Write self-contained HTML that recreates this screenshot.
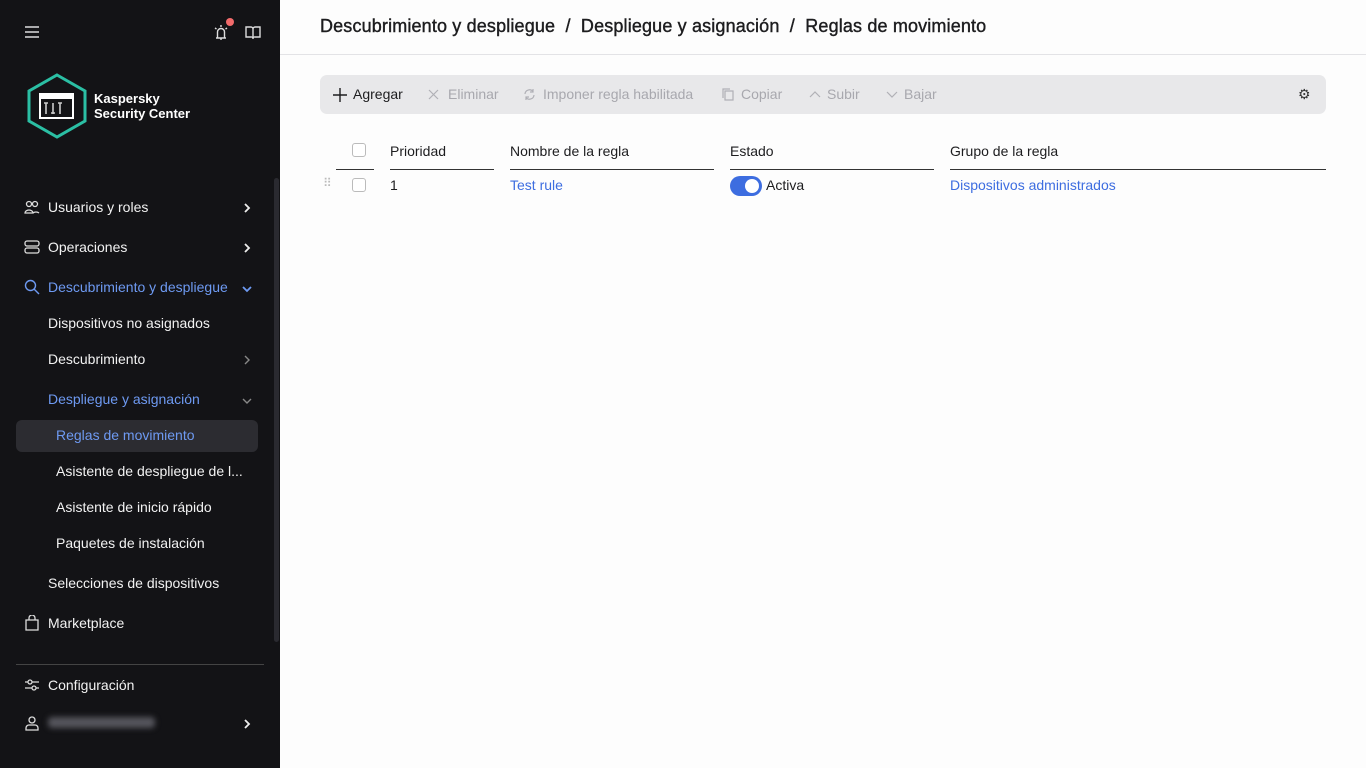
<!DOCTYPE html>
<html><head><meta charset="utf-8"><style>
*{margin:0;padding:0;box-sizing:border-box}
body{width:1366px;height:768px;overflow:hidden;font-family:"Liberation Sans",sans-serif;background:#fff;position:relative}
.sb{position:absolute;left:0;top:0;width:280px;height:768px;background:#131316;color:#fff}
.it{position:absolute;left:48px;font-size:14px;color:#f2f2f2;white-space:nowrap}
.ic{position:absolute;left:24px}
.ch{position:absolute;left:243px}
.main{position:absolute;left:280px;top:0;width:1086px;height:768px;background:#fdfdfd}
.gray{color:#a8a8ae}
.tb span{position:absolute;top:86px;font-size:14px}
.th{position:absolute;top:143px;font-size:14px;color:#1d1d1f}
.ln{position:absolute;top:169px;height:1px;background:#333}
.td{position:absolute;top:177px;font-size:14px}
.cb{position:absolute;width:14px;height:14px;border:1px solid #bbb;border-radius:3px;background:#fff}
a{color:#3d6de0;text-decoration:none}
</style></head><body>
<div class="sb">
<svg style="position:absolute;left:25px;top:26px" width="14" height="12"><path d="M0 1h14M0 6h14M0 11h14" stroke="#ddd" stroke-width="1.6"/></svg>
<svg style="position:absolute;left:212px;top:22px" width="20" height="20"><path d="M4 16h10M5.5 16v-6a3.5 3.5 0 0 1 7 0v6M9 16v2M3 6l1.5 1M15 6l-1.5 1M9 3v2" stroke="#ddd" stroke-width="1.4" fill="none"/></svg>
<div style="position:absolute;left:226px;top:18px;width:8px;height:8px;border-radius:50%;background:#f26b6b"></div>
<svg style="position:absolute;left:245px;top:25px" width="16" height="14"><path d="M1 2h5a2 2 0 0 1 2 2v9a2 2 0 0 0-2-1H1zM15 2h-5a2 2 0 0 0-2 2v9a2 2 0 0 1 2-1h5z" stroke="#ddd" stroke-width="1.4" fill="none"/></svg>
<svg style="position:absolute;left:26px;top:73px" width="62" height="66"><polygon points="31,2 59,18 59,48 31,64 3,48 3,18" fill="none" stroke="#2bbfa4" stroke-width="3"/><rect x="14" y="21" width="33" height="24" fill="none" stroke="#fff" stroke-width="2"/><rect x="14" y="21" width="33" height="5" fill="#fff"/><path d="M20 30v11M18 30h4M27 30v11M25 40h4M34 30v11M32 30h4" stroke="#ccc" stroke-width="1.6"/></svg>
<div style="position:absolute;left:94px;top:91px;font-size:13px;font-weight:bold;line-height:15px;color:#fff">Kaspersky<br>Security Center</div>
<svg class="ic" style="top:200px" width="16" height="14"><circle cx="5" cy="4" r="2.5" fill="none" stroke="#ddd" stroke-width="1.3"/><circle cx="11" cy="4" r="2.5" fill="none" stroke="#ddd" stroke-width="1.3"/><path d="M1 13a4 3 0 0 1 8 0zM9 13a4 3 0 0 1 6 0" fill="none" stroke="#ddd" stroke-width="1.3"/></svg>
<div class="it" style="top:199px">Usuarios y roles</div>
<svg class="ch" style="top:203px" width="8" height="10"><path d="M2 1l4 4-4 4" stroke="#eee" stroke-width="1.8" fill="none"/></svg>
<svg class="ic" style="top:240px" width="16" height="14"><rect x="1" y="1" width="14" height="5" rx="2" fill="none" stroke="#ddd" stroke-width="1.3"/><rect x="1" y="8" width="14" height="5" rx="2" fill="none" stroke="#ddd" stroke-width="1.3"/></svg>
<div class="it" style="top:239px">Operaciones</div>
<svg class="ch" style="top:243px" width="8" height="10"><path d="M2 1l4 4-4 4" stroke="#eee" stroke-width="1.8" fill="none"/></svg>
<svg class="ic" style="top:279px" width="16" height="16"><circle cx="6.5" cy="6.5" r="5" fill="none" stroke="#6e9af2" stroke-width="1.4"/><path d="M10 10l5 5" stroke="#6e9af2" stroke-width="1.4"/></svg>
<div class="it" style="top:279px;color:#6e9af2">Descubrimiento y despliegue</div>
<svg class="ch" style="top:285px;left:242px" width="10" height="8"><path d="M1 2l4 4 4-4" stroke="#6e9af2" stroke-width="1.8" fill="none"/></svg>
<div class="it" style="top:315px">Dispositivos no asignados</div>
<div class="it" style="top:351px">Descubrimiento</div>
<svg class="ch" style="top:355px" width="8" height="10"><path d="M2 1l4 4-4 4" stroke="#888" stroke-width="1.4" fill="none"/></svg>
<div class="it" style="top:391px;color:#6e9af2">Despliegue y asignación</div>
<svg class="ch" style="top:397px;left:242px" width="10" height="8"><path d="M1 2l4 4 4-4" stroke="#888" stroke-width="1.4" fill="none"/></svg>
<div style="position:absolute;left:16px;top:420px;width:242px;height:32px;border-radius:6px;background:#2c2c31"></div>
<div class="it" style="left:56px;top:427px;color:#6e9af2">Reglas de movimiento</div>
<div class="it" style="left:56px;top:463px">Asistente de despliegue de l...</div>
<div class="it" style="left:56px;top:499px">Asistente de inicio rápido</div>
<div class="it" style="left:56px;top:535px">Paquetes de instalación</div>
<div class="it" style="top:575px">Selecciones de dispositivos</div>
<svg class="ic" style="top:615px" width="16" height="16"><path d="M2 5h12v10H2zM5 5V3a3 3 0 0 1 6 0v2" fill="none" stroke="#ddd" stroke-width="1.3"/></svg>
<div class="it" style="top:615px">Marketplace</div>
<div style="position:absolute;left:274px;top:178px;width:5px;height:464px;border-radius:3px;background:#2a2a30"></div>
<div style="position:absolute;left:16px;top:664px;width:248px;height:1px;background:#444"></div>
<svg class="ic" style="top:678px" width="16" height="14"><path d="M1 4h14M1 10h14" stroke="#ddd" stroke-width="1.3"/><circle cx="6" cy="4" r="2" fill="#131316" stroke="#ddd" stroke-width="1.3"/><circle cx="10" cy="10" r="2" fill="#131316" stroke="#ddd" stroke-width="1.3"/></svg>
<div class="it" style="top:677px">Configuración</div>
<svg class="ic" style="top:715px" width="16" height="16"><circle cx="8" cy="5" r="3" fill="none" stroke="#ddd" stroke-width="1.3"/><path d="M2 15v-2a3 3 0 0 1 3-3h6a3 3 0 0 1 3 3v2z" fill="none" stroke="#ddd" stroke-width="1.3"/></svg>
<div style="position:absolute;left:48px;top:717px;width:107px;height:11px;background:#55555c;filter:blur(3px);border-radius:4px"></div>
<svg class="ch" style="top:719px" width="8" height="10"><path d="M2 1l4 4-4 4" stroke="#eee" stroke-width="1.8" fill="none"/></svg>
</div>
<div class="main">
<div style="position:absolute;left:40px;top:16px;font-size:18px;color:#1d1d1f;letter-spacing:0.15px;-webkit-text-stroke:0.4px #1d1d1f">Descubrimiento y despliegue &nbsp;/ &nbsp;Despliegue y asignación &nbsp;/ &nbsp;Reglas de movimiento</div>
<div style="position:absolute;left:0;top:54px;width:1086px;height:1px;background:#e3e3e6"></div>
<div style="position:absolute;left:40px;top:75px;width:1006px;height:39px;border-radius:7px;background:#e8e8ea"></div>
<div class="tb">
<svg style="position:absolute;left:53px;top:88px" width="14" height="14"><path d="M7 0v14M0 7h14" stroke="#1d1d1f" stroke-width="1.4"/></svg>
<span style="left:73px;color:#1d1d1f">Agregar</span>
<svg style="position:absolute;left:148px;top:89px" width="11" height="11"><path d="M1 1l9 9M10 1l-9 9" stroke="#b0b0b6" stroke-width="1.2"/></svg>
<span class="gray" style="left:168px">Eliminar</span>
<svg style="position:absolute;left:243px;top:88px" width="13" height="13"><path d="M2 6a4.5 4.5 0 0 1 8-2.5M11 7a4.5 4.5 0 0 1-8 2.5M10 1v3H7M3 12V9h3" stroke="#b0b0b6" stroke-width="1.2" fill="none"/></svg>
<span class="gray" style="left:263px">Imponer regla habilitada</span>
<svg style="position:absolute;left:442px;top:88px" width="12" height="13"><path d="M3 3h8v9H3zM1 10V1h7" stroke="#b0b0b6" stroke-width="1.2" fill="none"/></svg>
<span class="gray" style="left:461px">Copiar</span>
<svg style="position:absolute;left:529px;top:90px" width="12" height="8"><path d="M1 7l5-5 5 5" stroke="#b0b0b6" stroke-width="1.2" fill="none"/></svg>
<span class="gray" style="left:547px">Subir</span>
<svg style="position:absolute;left:606px;top:91px" width="12" height="8"><path d="M1 1l5 5 5-5" stroke="#b0b0b6" stroke-width="1.2" fill="none"/></svg>
<span class="gray" style="left:624px">Bajar</span>
<span style="left:1018px;color:#333">⚙</span>
</div>
<div class="cb" style="left:72px;top:143px"></div>
<div class="th" style="left:110px">Prioridad</div>
<div class="th" style="left:230px">Nombre de la regla</div>
<div class="th" style="left:450px">Estado</div>
<div class="th" style="left:670px">Grupo de la regla</div>
<div class="ln" style="left:56px;width:38px"></div>
<div class="ln" style="left:110px;width:104px"></div>
<div class="ln" style="left:230px;width:204px"></div>
<div class="ln" style="left:450px;width:204px"></div>
<div class="ln" style="left:670px;width:376px"></div>
<div class="td" style="left:43px;color:#bbb;font-size:12px;top:176px">⠿</div>
<div class="cb" style="left:72px;top:178px"></div>
<div class="td" style="left:110px;color:#1d1d1f">1</div>
<div class="td" style="left:230px"><a>Test rule</a></div>
<div style="position:absolute;left:450px;top:176px;width:32px;height:20px;border-radius:10px;background:#3d6de0"><div style="position:absolute;right:3px;top:3px;width:14px;height:14px;border-radius:50%;background:#fff"></div></div>
<div class="td" style="left:486px;color:#1d1d1f">Activa</div>
<div class="td" style="left:670px"><a>Dispositivos administrados</a></div>
</div>
</body></html>
